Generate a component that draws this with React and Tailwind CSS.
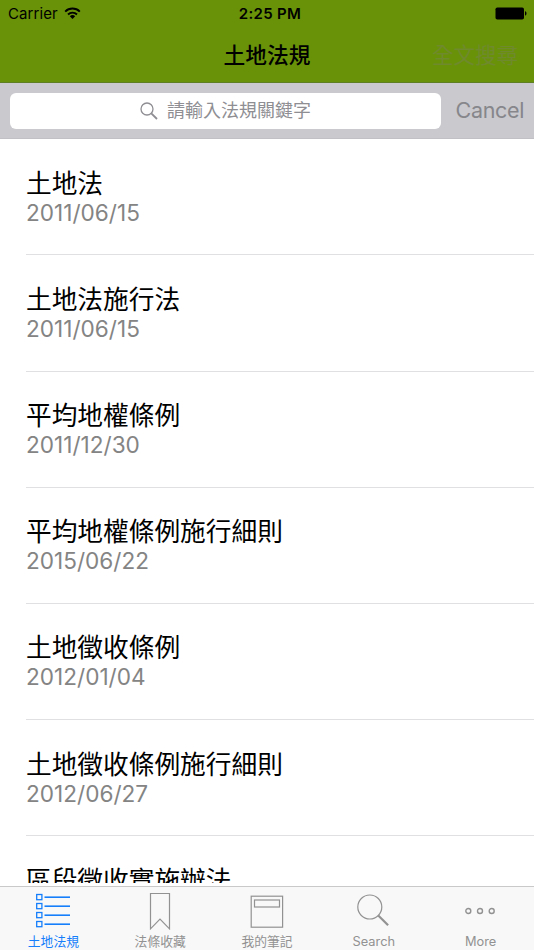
import React, { useState } from "react";

const laws = [
  { name: "土地法", date: "2011/06/15" },
  { name: "土地法施行法", date: "2011/06/15" },
  { name: "平均地權條例", date: "2011/12/30" },
  { name: "平均地權條例施行細則", date: "2015/06/22" },
  { name: "土地徵收條例", date: "2012/01/04" },
  { name: "土地徵收條例施行細則", date: "2012/06/27" },
  { name: "區段徵收實施辦法" },
];

const ListIcon = () => (
  <svg width="36" height="36" viewBox="0 0 36 36" fill="none" stroke="currentColor">
    {[1.5, 10.5, 19.5, 28.5].map((y) => (
      <g key={y}>
        <rect x="1.7" y={y} width="5.2" height="5.2" strokeWidth="1.3" />
        <path d={`M9.5 ${y + 2.7}h25.5`} strokeWidth="1.6" />
      </g>
    ))}
  </svg>
);

const BookmarkIcon = () => (
  <svg width="22" height="38" viewBox="0 0 22 38" fill="none" stroke="currentColor">
    <path d="M1.5 1.5h19v35.3l-9.5-9.6-9.5 9.6z" strokeWidth="1.2" />
  </svg>
);

const NoteIcon = () => (
  <svg width="34" height="34" viewBox="0 0 34 34" fill="none" stroke="currentColor" strokeWidth="1.2">
    <rect x="1.2" y="2.2" width="31.4" height="31" />
    <rect x="4.5" y="6" width="25" height="7" />
  </svg>
);

const MagnifierIcon = () => (
  <svg width="34" height="34" viewBox="0 0 34 34" fill="none" stroke="currentColor">
    <circle cx="12.8" cy="13" r="12" strokeWidth="1.2" />
    <path d="M21.3 21.5l9.8 9.8" strokeWidth="2.2" />
  </svg>
);

const MoreIcon = () => (
  <svg width="32" height="8" viewBox="0 0 32 8" fill="none" stroke="currentColor" strokeWidth="1.4">
    <circle cx="3.3" cy="4" r="2.5" />
    <circle cx="15" cy="4" r="2.5" />
    <circle cx="26.7" cy="4" r="2.5" />
  </svg>
);

const tabs = [
  { label: "土地法規", icon: ListIcon },
  { label: "法條收藏", icon: BookmarkIcon },
  { label: "我的筆記", icon: NoteIcon },
  { label: "Search", icon: MagnifierIcon },
  { label: "More", icon: MoreIcon },
];

function StatusBar() {
  return (
    <div className="grid h-[28px] grid-cols-[1fr_auto_1fr] items-center pl-2 pr-[7px] text-[15px]">
      <div className="flex items-center gap-[6px]">
        <span className="tracking-[0.1px]">Carrier</span>
        <svg className="-mt-px" width="17" height="13" viewBox="0 0 17 13" fill="none" stroke="black" strokeWidth="1.9">
          <path d="M1.2 4.6a10.3 10.3 0 0 1 14.6 0" />
          <path d="M4 7.5a6.4 6.4 0 0 1 9 0" />
          <path d="M8.5 12L5.8 9.3a3.8 3.8 0 0 1 5.4 0z" fill="black" stroke="none" />
        </svg>
      </div>
      <span className="pl-[5px] text-center font-semibold tracking-[0.3px]">2:25 PM</span>
      <svg className="-mt-px justify-self-end" width="32" height="13" viewBox="0 0 32 13">
        <rect x="0.5" y="0.5" width="28.5" height="12" rx="1.8" />
        <path d="M30 4.3c2 .6 2 3.8 0 4.4z" />
      </svg>
    </div>
  );
}

export default function App() {
  const [active, setActive] = useState(0);

  return (
    <div className="flex h-[950px] w-[534px] flex-col overflow-hidden bg-white font-['Inter','Noto_Sans_CJK_TC',sans-serif] text-black">
      <header className="h-[83px] shrink-0 border-b border-[#5f7f24] bg-[#699209]">
        <StatusBar />
        <div className="grid h-[54px] grid-cols-[1fr_auto_1fr] items-center pr-4">
          <h1 className="col-start-2 pl-4 text-[21.7px] font-medium leading-[54px]">土地法規</h1>
          <button className="justify-self-end text-[21.5px] leading-[54px] text-[#6f8a2c]">全文搜尋</button>
        </div>
      </header>

      <div className="flex h-[56px] shrink-0 items-center border-b border-[#c0c0c5] bg-[#c9c9ce] pl-[10px] pr-[10px]">
        <div className="flex h-9 w-[431px] items-center justify-center gap-[9px] rounded-[6px] bg-white text-[#8e8e93]">
          <svg width="18" height="18" viewBox="0 0 18 18" fill="none" stroke="currentColor">
            <circle cx="7" cy="7" r="6" strokeWidth="1.3" />
            <path d="M11.3 11.3l5.7 5.7" strokeWidth="1.8" />
          </svg>
          <span className="text-[18px] leading-9">請輸入法規關鍵字</span>
        </div>
        <button className="flex-1 text-right text-[21.5px] tracking-[-0.35px] text-[#86868b]">Cancel</button>
      </div>

      <ul className="h-[744px] shrink-0 overflow-hidden pt-[0.3px]">
        {laws.map((law) => (
          <li key={law.name} className="ml-[26px] h-[116.15px] border-b border-[#e0e0e2] pt-[28.6px]">
            <p className="text-[25.7px] leading-[32px]">{law.name}</p>
            {law.date && <p className="text-[22.6px] leading-[26px] text-[#848484]">{law.date}</p>}
          </li>
        ))}
      </ul>

      <nav className="mt-[3px] grid h-[64px] shrink-0 grid-cols-5 border-t border-[#c9c9c9] bg-[#f8f8f8]">
        {tabs.map(({ label, icon: Icon }, index) => (
          <button
            key={label}
            onClick={() => setActive(index)}
            className={`flex flex-col items-center ${index === active ? "text-[#157efb]" : "text-[#929292]"}`}
          >
            <span className="flex h-[47px] items-center pt-px">
              <Icon />
            </span>
            <span className="text-[12.8px] leading-[15px]">{label}</span>
          </button>
        ))}
      </nav>
    </div>
  );
}
